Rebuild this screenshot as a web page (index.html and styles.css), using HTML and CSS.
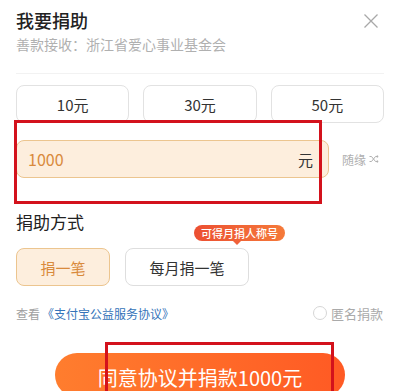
FILE: index.html
```html
<!DOCTYPE html>
<html lang="zh-CN">
<head>
<meta charset="utf-8">
<title>我要捐助</title>
<link rel="stylesheet" href="styles.css">
</head>
<body>
<div class="sheet">
  <div class="header">
    <div class="titles">
      <div class="title">我要捐助</div>
      <div class="subtitle">善款接收：浙江省爱心事业基金会</div>
    </div>
    <svg class="close" width="16" height="16" viewBox="0 0 16 16"><path d="M1.5 1.5L14.5 14.5M14.5 1.5L1.5 14.5" stroke="#a8a8a8" stroke-width="1.3" fill="none"/></svg>
  </div>
  <div class="divider"></div>
  <div class="amounts">
    <div class="amount">10元</div>
    <div class="amount">30元</div>
    <div class="amount">50元</div>
  </div>
  <div class="input-row">
    <div class="input">
      <span class="value">1000</span>
      <span class="unit">元</span>
    </div>
    <div class="random">随缘
      <svg class="shuffle" width="10" height="8" viewBox="0 0 10 8"><path d="M0.5 1.5H2.5L6.5 6.5H9M0.5 6.5H2.5L6.5 1.5H9M7.8 0.4L9.2 1.5L7.8 2.6M7.8 5.4L9.2 6.5L7.8 7.6" stroke="#b0b0b0" stroke-width="1" fill="none"/></svg>
    </div>
  </div>
  <div class="section-title">捐助方式</div>
  <div class="methods">
    <div class="method active">捐一笔</div>
    <div class="method">每月捐一笔
      <div class="tip">可得月捐人称号</div>
    </div>
  </div>
  <div class="agree-row">
    <div class="agree"><span class="muted">查看</span><span class="link">《支付宝公益服务协议》</span></div>
    <div class="anon"><span class="radio"></span>匿名捐款</div>
  </div>
  <div class="submit-clip">
    <div class="submit">同意协议并捐款1000元</div>
  </div>
</div>
<div class="mark mark-input"></div>
<div class="mark mark-btn"></div>
</body>
</html>
```

FILE: styles.css
```css
html, body {
  margin: 0;
  padding: 0;
  background: #ffffff;
  overflow: hidden;
}
body {
  font-family: "Noto Sans CJK SC", "Noto Sans", sans-serif;
  color: #222;
  width: 400px;
  height: 391px;
  position: relative;
}
.sheet {
  padding: 0 16px;
}
.header {
  display: flex;
  justify-content: space-between;
  align-items: flex-start;
  padding-top: 8px;
}
.title {
  font-size: 18px;
  line-height: 24px;
  font-weight: 500;
  color: #222;
}
.subtitle {
  margin-top: 2px;
  font-size: 14px;
  line-height: 20px;
  color: #b0b0b0;
}
.close {
  margin-top: 5px;
  margin-right: 5px;
}
.divider {
  margin-top: 19px;
  height: 1px;
  background: #f2f2f2;
}
.amounts {
  margin-top: 11px;
  display: grid;
  grid-template-columns: repeat(3, 1fr);
  gap: 14px;
}
.amount {
  height: 36px;
  border: 1px solid #e2e2e2;
  border-radius: 8px;
  display: flex;
  align-items: center;
  justify-content: center;
  font-size: 15px;
  color: #333;
}
.input-row {
  margin-top: 17px;
  display: flex;
  align-items: center;
  gap: 13px;
}
.input {
  height: 36px;
  border: 1px solid #ecc58f;
  background: #fdeedd;
  border-radius: 8px;
  display: flex;
  align-items: center;
  justify-content: space-between;
  padding: 0 15px 0 11px;
  box-sizing: content-box;
  width: 285px;
}
.value {
  font-size: 16px;
  color: #d98a3c;
}
.unit {
  font-size: 15px;
  color: #333;
}
.random {
  font-size: 12px;
  color: #b0b0b0;
  display: flex;
  align-items: center;
  gap: 3px;
}
.section-title {
  margin-top: 32px;
  font-size: 17px;
  line-height: 24px;
  color: #222;
}
.methods {
  margin-top: 14px;
  display: flex;
  gap: 15px;
}
.method {
  position: relative;
  height: 36px;
  border: 1px solid #dedede;
  border-radius: 8px;
  display: flex;
  align-items: center;
  justify-content: center;
  font-size: 15px;
  color: #333;
  width: 122px;
}
.method.active {
  width: 92px;
  background: #fdeedd;
  border-color: #ecc58f;
  color: #d98a3c;
}
.tip {
  position: absolute;
  left: 68px;
  top: -24px;
  height: 16px;
  padding: 0 7px;
  border-radius: 8px;
  background: linear-gradient(90deg, #ec4f32, #f57a3a);
  color: #fff;
  font-size: 11px;
  line-height: 16px;
  white-space: nowrap;
  font-weight: 500;
}
.tip::after {
  content: "";
  position: absolute;
  left: 39px;
  bottom: -4px;
  border-left: 4px solid transparent;
  border-right: 4px solid transparent;
  border-top: 4px solid #f0613a;
}
.agree-row {
  margin-top: 17px;
  height: 20px;
  display: flex;
  justify-content: space-between;
  align-items: center;
}
.agree {
  font-size: 12px;
}
.muted {
  color: #a0a0a0;
  margin-right: 2px;
}
.link {
  color: #3473b9;
}
.anon {
  display: flex;
  align-items: center;
  font-size: 13px;
  color: #aaa;
  gap: 4px;
  margin-right: 1px;
}
.radio {
  width: 12px;
  height: 12px;
  border: 1px solid #d6d6d6;
  border-radius: 50%;
}
.submit-clip {
  margin-top: 30px;
  height: 38px;
  overflow: hidden;
}
.submit {
  margin: 0 auto;
  width: 290px;
  height: 44px;
  border-radius: 22px;
  background: linear-gradient(90deg, #ff7d2e, #ff5a24);
  color: #fff;
  font-size: 20px;
  line-height: 24px;
  display: flex;
  align-items: flex-start;
  justify-content: center;
  padding-top: 13px;
  box-sizing: border-box;
}
.mark {
  position: absolute;
  border: 3px solid #d3121c;
  box-sizing: border-box;
}
.mark-input {
  left: 14px;
  top: 120px;
  width: 308px;
  height: 84px;
}
.mark-btn {
  left: 105px;
  top: 342px;
  width: 229px;
  height: 49px;
  border-bottom: none;
}
```
